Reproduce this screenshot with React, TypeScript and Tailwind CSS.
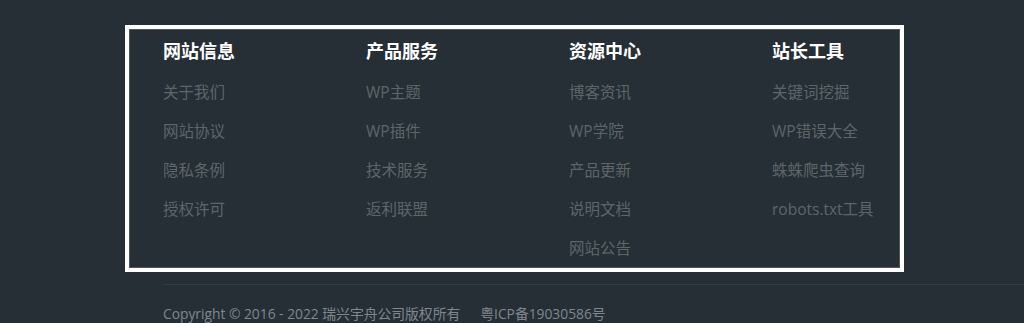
const columns = [
  { title: "网站信息", links: ["关于我们", "网站协议", "隐私条例", "授权许可"] },
  { title: "产品服务", links: ["WP主题", "WP插件", "技术服务", "返利联盟"] },
  { title: "资源中心", links: ["博客资讯", "WP学院", "产品更新", "说明文档", "网站公告"] },
  { title: "站长工具", links: ["关键词挖掘", "WP错误大全", "蛛蛛爬虫查询", "robots.txt工具"] },
]

export default function App() {
  return (
    <div
      className="h-[323px] w-full overflow-hidden bg-[#262f36] pt-[25px]"
      style={{ fontFamily: '"Open Sans", "Noto Sans CJK SC", sans-serif' }}
    >
      {/* Footer columns */}
      <div className="ml-[125px] w-[779px] h-[247px] border-4 border-white">
        <div className="h-full border border-[#4e565c] pl-[33px] pt-[8px]">
          <div className="grid grid-cols-[203px_203px_203px_203px]">
            {columns.map((col) => (
              <div key={col.title}>
                <h3 className="text-[18px] leading-[26px] font-bold text-white">{col.title}</h3>
                <ul className="mt-[9px]">
                  {col.links.map((link) => (
                    <li key={link} className="h-[39px] text-[15.5px] leading-[39px] text-[#5e6569]">
                      {link}
                    </li>
                  ))}
                </ul>
              </div>
            ))}
          </div>
        </div>
      </div>

      {/* Bottom bar */}
      <div className="ml-[163px] mt-[12px] border-t border-[#313c44]">
        <p className="mt-[18px] flex gap-[20px] text-[13.8px] leading-[22px] text-[#80878c]">
          <span>Copyright © 2016 - 2022 瑞兴宇舟公司版权所有</span>
          <span>粤ICP备19030586号</span>
        </p>
      </div>
    </div>
  )
}
